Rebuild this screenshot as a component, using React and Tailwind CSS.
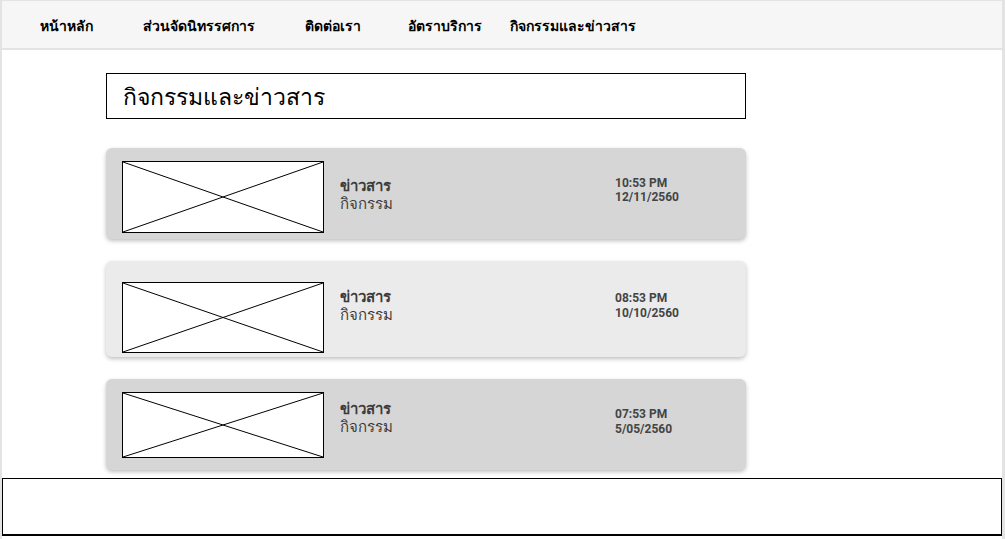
const navItems = [
  { label: "หน้าหลัก", w: "w-[103px]" },
  { label: "ส่วนจัดนิทรรศการ", w: "w-[162px]" },
  { label: "ติดต่อเรา", w: "w-[103px]" },
  { label: "อัตราบริการ", w: "w-[102px]" },
  { label: "กิจกรรมและข่าวสาร", w: "w-auto" },
]

const news = [
  {
    time: "10:53 PM",
    date: "12/11/2560",
    bg: "bg-[#d6d6d6]",
    box: "h-[91px] pt-[13px]",
    img: "h-[72px]",
    textMt: "mt-[15px]",
    timeMt: "mt-[15px]",
    timeLh: "leading-[14px]",
  },
  {
    time: "08:53 PM",
    date: "10/10/2560",
    bg: "bg-[#ebebeb]",
    box: "h-[96px] pt-[21px]",
    img: "h-[71px]",
    textMt: "mt-[5px]",
    timeMt: "mt-[9px]",
    timeLh: "leading-[15px]",
  },
  {
    time: "07:53 PM",
    date: "5/05/2560",
    bg: "bg-[#d6d6d6]",
    box: "h-[91px] pt-[13px]",
    img: "h-[66px]",
    textMt: "mt-[7px]",
    timeMt: "mt-[15px]",
    timeLh: "leading-[15px]",
  },
]

const Placeholder = ({ className }) => (
  <div className={`w-[202px] shrink-0 border border-black bg-white ${className}`}>
    <svg className="w-full h-full block" viewBox="0 0 100 100" preserveAspectRatio="none">
      <line x1="0" y1="0" x2="100" y2="100" stroke="black" strokeWidth="1" vectorEffect="non-scaling-stroke" />
      <line x1="100" y1="0" x2="0" y2="100" stroke="black" strokeWidth="1" vectorEffect="non-scaling-stroke" />
    </svg>
  </div>
)

const NewsCard = ({ item }) => (
  <div className={`flex items-start px-4 rounded-md shadow-[0_2px_4px_rgba(0,0,0,0.25)] ${item.bg} ${item.box}`}>
    <Placeholder className={item.img} />
    <div className={`w-[275px] ml-4 text-[15px] leading-[18px] text-[#3c3c3c] ${item.textMt}`}>
      <p className="font-semibold">ข่าวสาร</p>
      <p>กิจกรรม</p>
    </div>
    <div className={`font-['Roboto',sans-serif] font-bold text-[12px] text-[#444] ${item.timeLh} ${item.timeMt}`}>
      <p>{item.time}</p>
      <p>{item.date}</p>
    </div>
  </div>
)

const App = () => {
  return (
    <div className="h-[539px] w-[1005px] overflow-hidden bg-white border-l-2 border-r-[3px] border-t border-[#e3e3e3] font-['Noto_Sans','DejaVu_Sans',sans-serif]">
      <nav className="h-[49px] bg-[#f6f6f6] border-b-2 border-[#e3e3e3] flex items-center pl-[38px] pt-[3px]">
        {navItems.map((n) => (
          <div key={n.label} className={`${n.w} text-[14px] font-bold text-black leading-none`}>
            {n.label}
          </div>
        ))}
      </nav>

      <main className="ml-[104px] w-[640px] pt-[23px]">
        <div className="h-[46px] border border-black flex items-center pl-4">
          <h1 className="text-[23px] text-black">กิจกรรมและข่าวสาร</h1>
        </div>

        <div className="mt-[29px] flex flex-col gap-[22px]">
          {news.map((item) => (
            <NewsCard key={item.date} item={item} />
          ))}
        </div>
      </main>

      <footer className="mt-[8px] h-[58px] w-[1000px] border border-b-2 border-black bg-white"></footer>
    </div>
  )
}

export default App
